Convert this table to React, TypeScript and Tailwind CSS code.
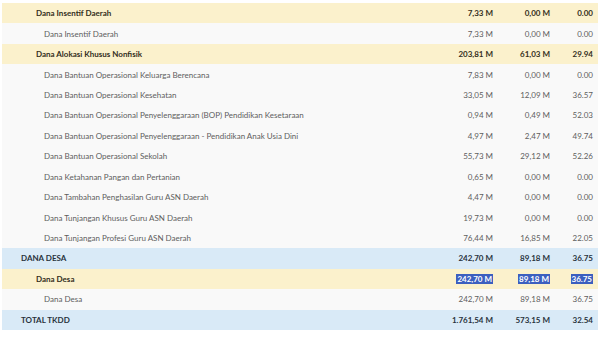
import React from "react";

type Level = "top" | "group" | "item";

interface Row {
  label: string;
  pagu: string;
  realisasi: string;
  persen: string;
  level: Level;
  selected?: boolean;
}

const rows: Row[] = [
  { label: "Dana Insentif Daerah", pagu: "7,33 M", realisasi: "0,00 M", persen: "0.00", level: "group" },
  { label: "Dana Insentif Daerah", pagu: "7,33 M", realisasi: "0,00 M", persen: "0.00", level: "item" },
  { label: "Dana Alokasi Khusus Nonfisik", pagu: "203,81 M", realisasi: "61,03 M", persen: "29.94", level: "group" },
  { label: "Dana Bantuan Operasional Keluarga Berencana", pagu: "7,83 M", realisasi: "0,00 M", persen: "0.00", level: "item" },
  { label: "Dana Bantuan Operasional Kesehatan", pagu: "33,05 M", realisasi: "12,09 M", persen: "36.57", level: "item" },
  { label: "Dana Bantuan Operasional Penyelenggaraan (BOP) Pendidikan Kesetaraan", pagu: "0,94 M", realisasi: "0,49 M", persen: "52.03", level: "item" },
  { label: "Dana Bantuan Operasional Penyelenggaraan - Pendidikan Anak Usia Dini", pagu: "4,97 M", realisasi: "2,47 M", persen: "49.74", level: "item" },
  { label: "Dana Bantuan Operasional Sekolah", pagu: "55,73 M", realisasi: "29,12 M", persen: "52.26", level: "item" },
  { label: "Dana Ketahanan Pangan dan Pertanian", pagu: "0,65 M", realisasi: "0,00 M", persen: "0.00", level: "item" },
  { label: "Dana Tambahan Penghasilan Guru ASN Daerah", pagu: "4,47 M", realisasi: "0,00 M", persen: "0.00", level: "item" },
  { label: "Dana Tunjangan Khusus Guru ASN Daerah", pagu: "19,73 M", realisasi: "0,00 M", persen: "0.00", level: "item" },
  { label: "Dana Tunjangan Profesi Guru ASN Daerah", pagu: "76,44 M", realisasi: "16,85 M", persen: "22.05", level: "item" },
  { label: "DANA DESA", pagu: "242,70 M", realisasi: "89,18 M", persen: "36.75", level: "top" },
  { label: "Dana Desa", pagu: "242,70 M", realisasi: "89,18 M", persen: "36.75", level: "group", selected: true },
  { label: "Dana Desa", pagu: "242,70 M", realisasi: "89,18 M", persen: "36.75", level: "item" },
  { label: "TOTAL TKDD", pagu: "1.761,54 M", realisasi: "573,15 M", persen: "32.54", level: "top" },
];

const rowStyle: Record<Level, string> = {
  top: "bg-[#d9eaf7] font-bold text-[#28323c]",
  group: "bg-[#fbf1cc] font-bold text-[#332e20]",
  item: "bg-[#f9f9f9] text-[#5e5e5e]",
};

const labelPad: Record<Level, string> = {
  top: "pl-[19px]",
  group: "pl-[34px]",
  item: "pl-[42px]",
};

const Cell: React.FC<{ value: string; selected?: boolean; className: string }> = ({ value, selected, className }) => (
  <div className={`${className} shrink-0 text-right`}>
    <span className={selected ? "bg-[#3c5fbf] text-white px-[1px]" : ""}>{value}</span>
  </div>
);

export default function App() {
  return (
    <div className="w-[600px] h-[337px] bg-white px-[2px] pt-[3px] text-[8px] font-['Lato',sans-serif]">
      {rows.map((row, i) => (
        <div key={i} className={`flex items-center h-[20.45px] ${rowStyle[row.level]}`}>
          <div className={`flex-1 whitespace-nowrap ${labelPad[row.level]}`}>{row.label}</div>
          <Cell value={row.pagu} selected={row.selected} className="w-[120px]" />
          <Cell value={row.realisasi} selected={row.selected} className="w-[57px]" />
          <Cell value={row.persen} selected={row.selected} className="w-[48px] pr-[5px]" />
        </div>
      ))}
    </div>
  );
}
